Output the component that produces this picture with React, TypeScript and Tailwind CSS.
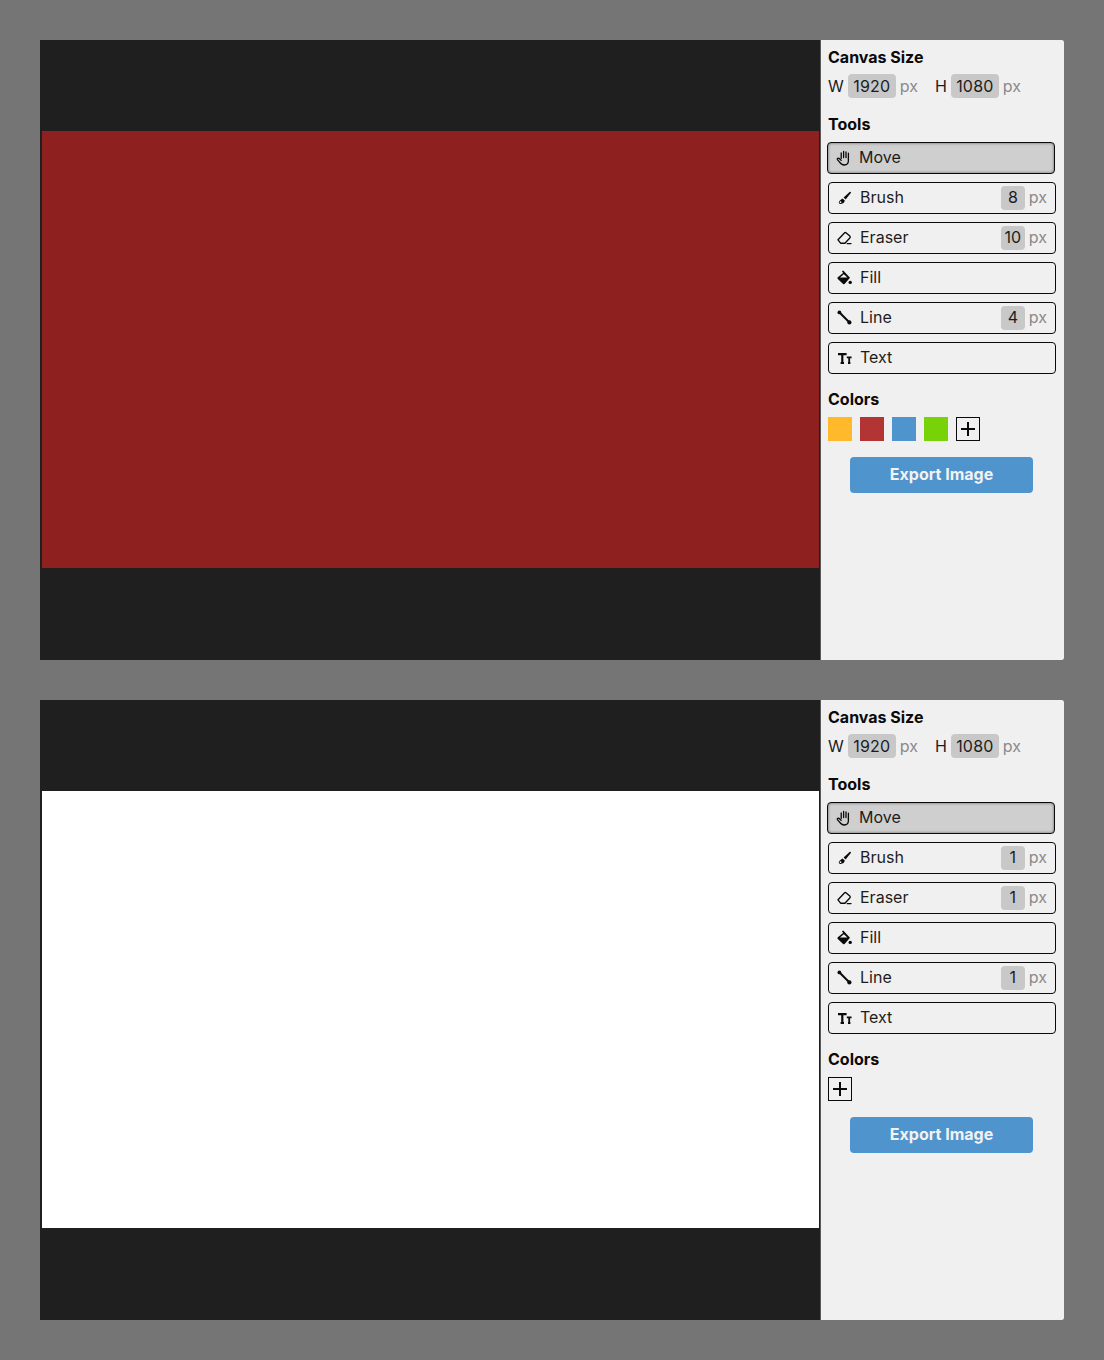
const font = { fontFamily: "Inter, sans-serif" };

function HandIcon() {
  return (
    <svg width="16" height="16" viewBox="0 0 16 16" fill="none" stroke="#0a0a0a" strokeWidth="1.3" strokeLinecap="round" strokeLinejoin="round">
      <path d="M5.2 8.5V3M7.6 7.5V1.4M10 7.5V1.9M12.4 8.5V3.2" />
      <path d="M12.4 8.5V10.5C12.4 13.4 10.8 15 8.2 15C5.8 15 4.6 13.9 3.6 12.2L1.4 9.6C0.9 8.6 2.2 7.6 3.2 8.5L5.2 10.4" />
    </svg>
  );
}

function BrushIcon() {
  return (
    <svg width="16" height="16" viewBox="0 0 16 16" fill="none">
      <path d="M6.6 7.6L12.6 1.9C13.3 1.3 14.4 2.3 13.8 3.1L8.6 9.6Z" fill="#0a0a0a" />
      <path d="M5.6 8.6L7.8 10.6C7.5 12.6 6.2 13.9 3.6 14C1.9 14 1.3 12.3 2.2 11.2C3.2 10.4 4.2 9.4 5.6 8.6Z" fill="#0a0a0a" />
      <circle cx="3.5" cy="12.2" r="0.9" fill="#f0f0f0" />
    </svg>
  );
}

function EraserIcon() {
  return (
    <svg width="16" height="16" viewBox="0 0 16 16" fill="none" stroke="#0a0a0a" strokeWidth="1.35" strokeLinejoin="round" strokeLinecap="round">
      <path d="M1 9.8L7.4 3C8 2.4 8.7 2.4 9.3 3L12.8 6.1C13.4 6.7 13.4 7.4 12.8 8L7.9 13.2H3.6Z" />
      <path d="M10.2 13.6H14" />
    </svg>
  );
}

function FillIcon() {
  return (
    <svg width="16" height="16" viewBox="0 0 16 16" fill="#0a0a0a">
      <path d="M5 1.2L6.2 0.6L13 7.8L7.8 13.8C7.3 14.4 6.6 14.4 6.1 13.9L0.8 8.9C0.3 8.4 0.3 7.7 0.8 7.2L6.1 3Z" />
      <path d="M6.8 4.2L3 7.6H10.4Z" fill="#f0f0f0" />
      <circle cx="13.2" cy="12.4" r="1.7" />
    </svg>
  );
}

function LineIcon() {
  return (
    <svg width="16" height="16" viewBox="0 0 16 16" fill="#0a0a0a" stroke="#0a0a0a">
      <path d="M2.5 2.5L12.5 12.5" strokeWidth="1.9" />
      <circle cx="2.4" cy="2.4" r="1.9" stroke="none" />
      <circle cx="12.4" cy="12.4" r="2.1" stroke="none" />
    </svg>
  );
}

function TextIcon() {
  return (
    <svg width="16" height="16" viewBox="0 0 16 16" fill="none" stroke="#0a0a0a" strokeWidth="2.2">
      <path d="M1 4.1H9.6M5.3 4V13.6M3.6 13H7" />
      <path d="M9.8 7.3H14.6M12.2 7.3V13.6M11 13H13.4" strokeWidth="1.8" />
    </svg>
  );
}

type Tool = { name: string; icon: React.ReactNode; size?: string };

function ToolRow({ tool }: { tool: Tool }) {
  return (
    <div className="flex h-8 items-center rounded-[4px] border border-[#0a0a0a] pl-[8px] pr-[8px]">
      <span className="flex w-4 justify-center">{tool.icon}</span>
      <span className="ml-[7px] flex-1 pb-[2px] text-[16px] text-[#1c1c1c]">{tool.name}</span>
      {tool.size && (
        <>
          <span className="flex h-6 w-6 items-center justify-center rounded-[4px] bg-[#c8c8c8] pb-[2px] text-[16px] text-[#1c1c1c]">{tool.size}</span>
          <span className="ml-[4px] pb-[2px] text-[16px] text-[#8a8a8a]">px</span>
        </>
      )}
    </div>
  );
}

function Panel({ surface, sizes, colors }: { surface: string; sizes: [string, string, string]; colors: string[] }) {
  const tools: Tool[] = [
    { name: "Brush", icon: <BrushIcon />, size: sizes[0] },
    { name: "Eraser", icon: <EraserIcon />, size: sizes[1] },
    { name: "Fill", icon: <FillIcon /> },
    { name: "Line", icon: <LineIcon />, size: sizes[2] },
    { name: "Text", icon: <TextIcon /> },
  ];
  return (
    <div className="flex h-[620px] overflow-hidden rounded-r-[2px] bg-[#1f1f1f]">
      <div className="flex w-[780px] items-center pb-[2px] pl-[2px] pr-px">
        <div className="h-[437px] w-full" style={{ backgroundColor: surface }} />
      </div>
      <div className="w-[244px] border-l border-[#5a5a5a] bg-[#f0f0f0] pl-[7px] pr-2 pt-[7px]">
        <h2 className="text-[16px] leading-[20px] font-bold text-[#0a0a0a]">Canvas Size</h2>
        <div className="mt-[7px] flex h-6 items-center text-[16px] text-[#1c1c1c]">
          <span>W</span>
          <span className="ml-[4px] flex h-6 w-12 items-center justify-center rounded-[4px] bg-[#c8c8c8] tracking-[0.2px]">1920</span>
          <span className="ml-[4px] text-[#8a8a8a]">px</span>
          <span className="ml-[17px]">H</span>
          <span className="ml-[4px] flex h-6 w-12 items-center justify-center rounded-[4px] bg-[#c8c8c8] tracking-[0.2px]">1080</span>
          <span className="ml-[4px] text-[#8a8a8a]">px</span>
        </div>
        <h2 className="mt-[16px] text-[16px] leading-[20px] font-bold text-[#0a0a0a]">Tools</h2>
        <div className="mt-[8px] -ml-px mb-[8px] mr-px flex h-8 items-center rounded-[4px] border border-[#0a0a0a] bg-[#cfcfcf] pl-[8px] shadow-[inset_0_0_3px_rgba(0,0,0,0.55)]">
          <span className="flex w-4 justify-center"><HandIcon /></span>
          <span className="ml-[7px] pb-[2px] text-[16px] text-[#1c1c1c]">Move</span>
        </div>
        <div className="flex flex-col gap-2">
          {tools.map((t) => (
            <ToolRow key={t.name} tool={t} />
          ))}
        </div>
        <h2 className="mt-[15px] text-[16px] leading-[20px] font-bold text-[#0a0a0a]">Colors</h2>
        <div className="mt-[8px] flex gap-2">
          {colors.map((c) => (
            <div key={c} className="h-6 w-6" style={{ backgroundColor: c }} />
          ))}
          <div className="flex h-6 w-6 items-center justify-center border border-[#0a0a0a]">
            <svg width="16" height="16" viewBox="0 0 16 16" stroke="#0a0a0a" strokeWidth="2">
              <path d="M8 1V15M1 8H15" />
            </svg>
          </div>
        </div>
        <button className="mt-[16px] ml-[22px] flex h-9 w-[183px] items-center justify-center rounded-[4px] bg-[#4f94cd] pb-[2px] text-[16px] font-bold text-[#f2f2f2]">
          Export Image
        </button>
      </div>
    </div>
  );
}

export default function App() {
  return (
    <div className="flex min-h-[1360px] flex-col gap-10 bg-[#757575] p-10" style={font}>
      <Panel surface="#8e2020" sizes={["8", "10", "4"]} colors={["#ffb92a", "#b23434", "#4f94cd", "#77d207"]} />
      <Panel surface="#ffffff" sizes={["1", "1", "1"]} colors={[]} />
    </div>
  );
}
